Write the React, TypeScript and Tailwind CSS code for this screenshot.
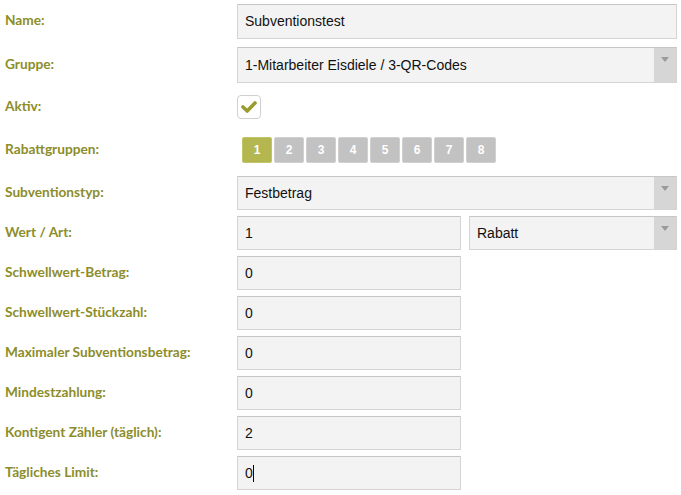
import React from "react";

const labelCls =
  "w-[237px] shrink-0 pl-[5px] text-[13.7px] font-bold text-[#8c8d2b] leading-[16px] font-['Lato',sans-serif]";
const fieldBase =
  "h-full flex items-center pl-[7px] bg-[#f3f3f3] border border-[#d4d4d4] border-t-[#c6c6c6] text-[14px] text-[#111]";

function TextBox({ value, cursor, w = "w-[224px]" }: { value: string; cursor?: boolean; w?: string }) {
  return (
    <div className={`${fieldBase} ${w}`}>
      <span>{value}</span>
      {cursor && <span className="inline-block w-px h-[17px] bg-black" />}
    </div>
  );
}

function Select({ value, w }: { value: string; w: string }) {
  return (
    <div className={`h-full flex bg-[#f3f3f3] border border-[#d4d4d4] border-t-[#c6c6c6] ${w}`}>
      <div className="flex-1 flex items-center pl-[7px] text-[14px] text-[#111]">{value}</div>
      <div className="w-[22px] h-full bg-[#d6d6d6] flex justify-center pt-[9px]">
        <svg width="8" height="5" viewBox="0 0 8 5">
          <polygon points="0,0 8,0 4,5" fill="#9a9a9a" />
        </svg>
      </div>
    </div>
  );
}

function Row({ label, h, mt, children }: { label: string; h: string; mt: string; children: React.ReactNode }) {
  return (
    <div className={`flex items-center ${h} ${mt}`}>
      <div className={`${labelCls} pb-[3px]`}>{label}</div>
      {children}
    </div>
  );
}

export default function App() {
  const groups = ["1", "2", "3", "4", "5", "6", "7", "8"];
  return (
    <div
      className="w-[681px] h-[495px] bg-white overflow-hidden"
      style={{ fontFamily: "'Liberation Sans', Arial, sans-serif" }}
    >
      <div className="flex flex-col">
        <Row label="Name:" h="h-[35px]" mt="mt-[4px]">
          <TextBox value="Subventionstest" w="w-[440px]" />
        </Row>
        <Row label="Gruppe:" h="h-[36px]" mt="mt-[8px]">
          <Select value="1-Mitarbeiter Eisdiele / 3-QR-Codes" w="w-[440px]" />
        </Row>
        <Row label="Aktiv:" h="h-[24px]" mt="mt-[12px]">
          <div className="w-[24px] h-[24px] bg-white border border-[#d0d0d0] rounded-[4px] flex items-center justify-center">
            <svg width="16" height="12" viewBox="0 0 16 12">
              <polyline
                points="2,6 6.2,10 14,2"
                fill="none"
                stroke="#9a9b2f"
                strokeWidth="3.6"
                strokeLinecap="round"
                strokeLinejoin="round"
              />
            </svg>
          </div>
        </Row>
        <Row label="Rabattgruppen:" h="h-[26px]" mt="mt-[18px]">
          <div className="flex gap-[2px] pl-[5px] h-full">
            {groups.map((g) => (
              <div
                key={g}
                className={`w-[30px] h-full rounded-[2px] flex items-center justify-center text-[12px] font-bold text-white border ${
                  g === "1" ? "bg-[#b4b74f] border-[#c2c46a]" : "bg-[#c2c2c2] border-[#d0d0d0]"
                }`}
              >
                {g}
              </div>
            ))}
          </div>
        </Row>
        <Row label="Subventionstyp:" h="h-[34px]" mt="mt-[13px]">
          <Select value="Festbetrag" w="w-[440px]" />
        </Row>
        <Row label="Wert / Art:" h="h-[34px]" mt="mt-[6px]">
          <TextBox value="1" />
          <div className="w-[8px]" />
          <Select value="Rabatt" w="w-[208px]" />
        </Row>
        <Row label="Schwellwert-Betrag:" h="h-[34px]" mt="mt-[6px]">
          <TextBox value="0" />
        </Row>
        <Row label="Schwellwert-Stückzahl:" h="h-[34px]" mt="mt-[6px]">
          <TextBox value="0" />
        </Row>
        <Row label="Maximaler Subventionsbetrag:" h="h-[34px]" mt="mt-[6px]">
          <TextBox value="0" />
        </Row>
        <Row label="Mindestzahlung:" h="h-[34px]" mt="mt-[6px]">
          <TextBox value="0" />
        </Row>
        <Row label="Kontigent Zähler (täglich):" h="h-[34px]" mt="mt-[6px]">
          <TextBox value="2" />
        </Row>
        <Row label="Tägliches Limit:" h="h-[34px]" mt="mt-[6px]">
          <TextBox value="0" cursor />
        </Row>
      </div>
    </div>
  );
}
